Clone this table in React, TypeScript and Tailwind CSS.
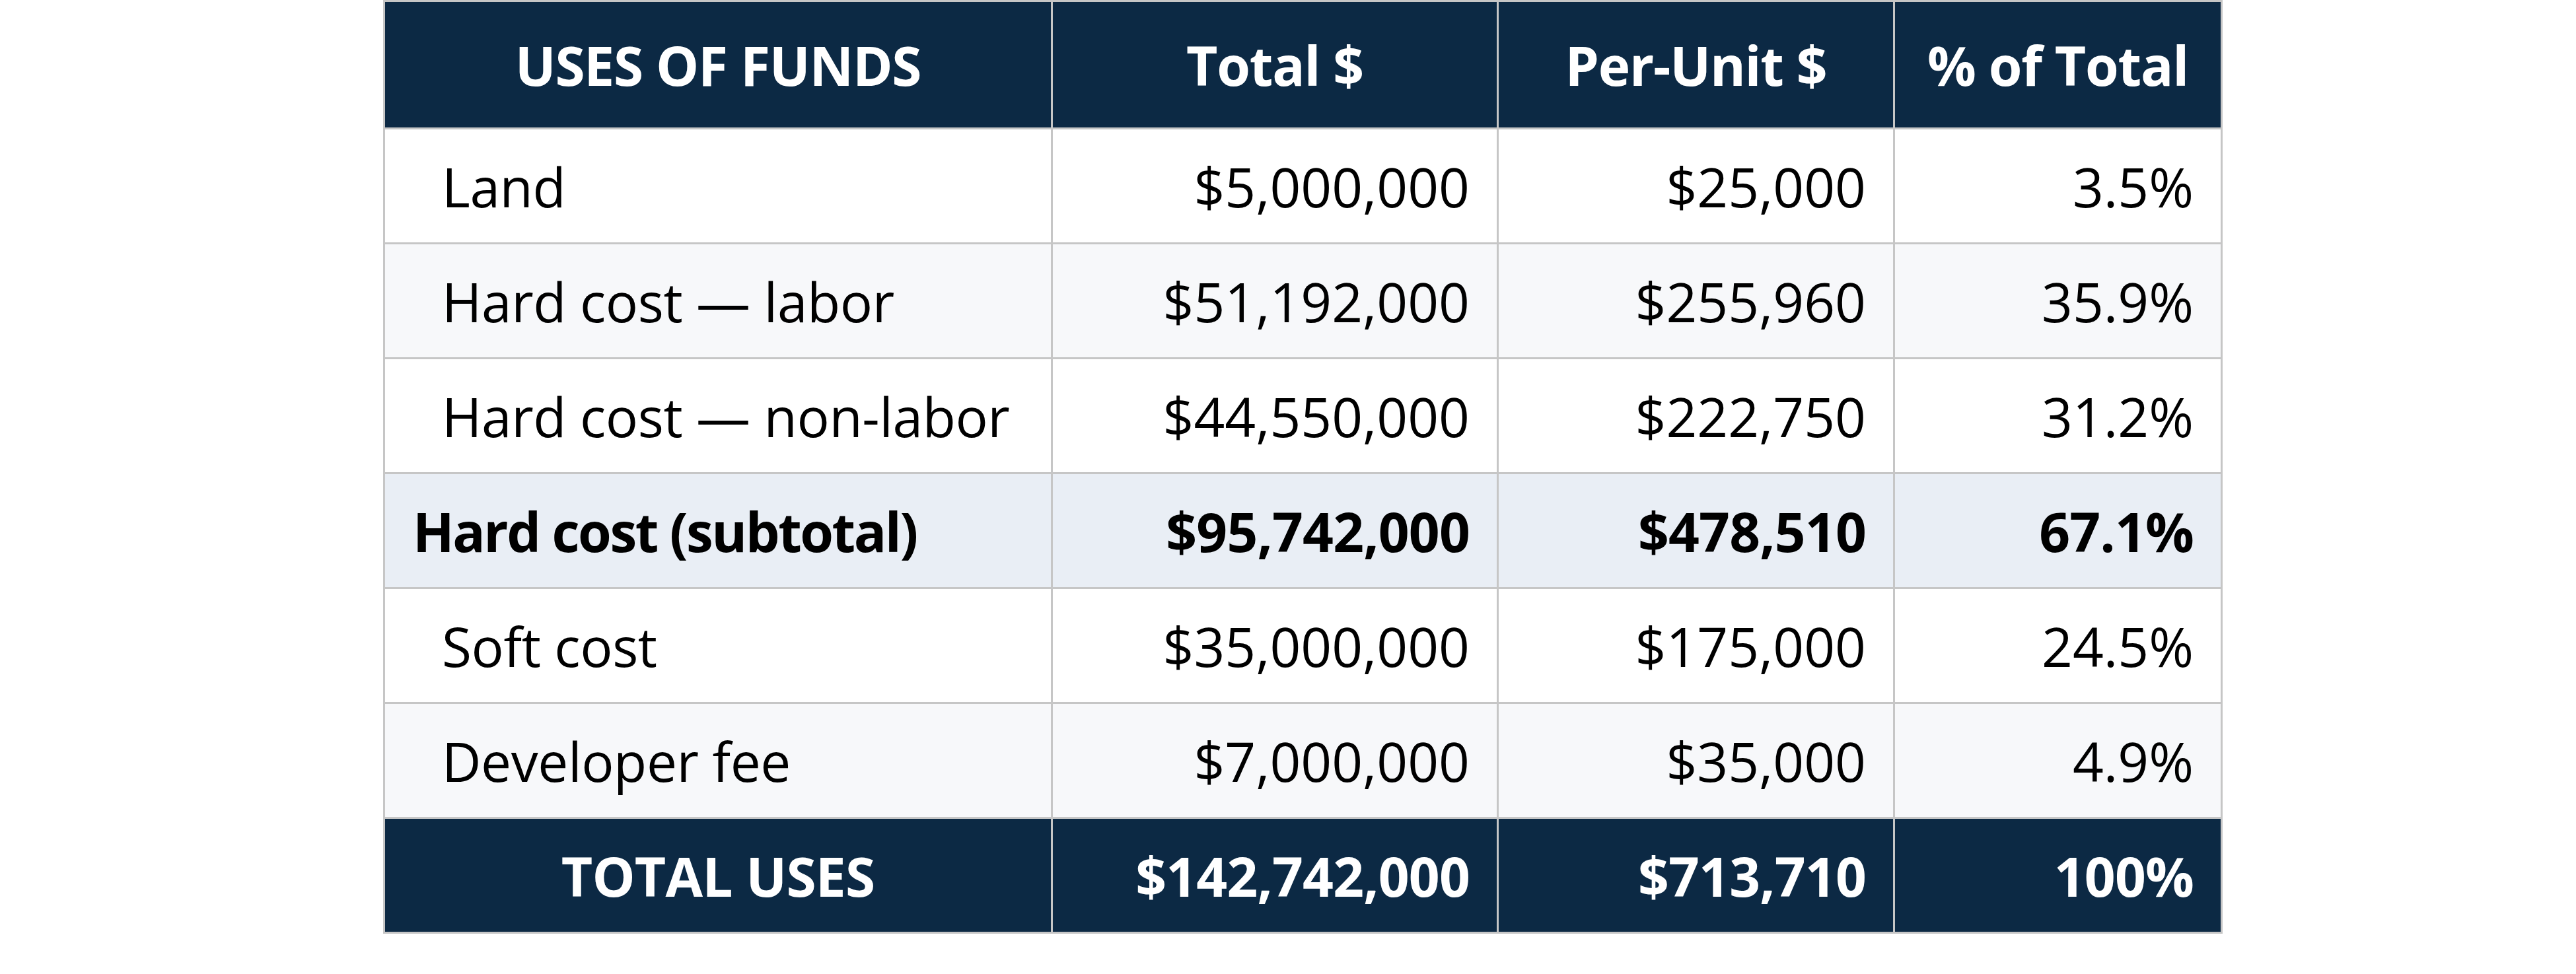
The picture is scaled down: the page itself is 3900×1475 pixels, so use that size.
const rows = [
  { label: "Land", total: "$5,000,000", unit: "$25,000", pct: "3.5%", kind: "item" },
  { label: "Hard cost — labor", total: "$51,192,000", unit: "$255,960", pct: "35.9%", kind: "item" },
  { label: "Hard cost — non-labor", total: "$44,550,000", unit: "$222,750", pct: "31.2%", kind: "item" },
  { label: "Hard cost (subtotal)", total: "$95,742,000", unit: "$478,510", pct: "67.1%", kind: "subtotal" },
  { label: "Soft cost", total: "$35,000,000", unit: "$175,000", pct: "24.5%", kind: "item" },
  { label: "Developer fee", total: "$7,000,000", unit: "$35,000", pct: "4.9%", kind: "item" },
];

const cell = "border-[3px] border-[#c6c6c6] h-[174px] p-0 align-middle";
const head = "h-[193px] border-[3px] border-[#c6c6c6] p-0 text-center align-middle";
const num = "text-right pr-[41px]";

export default function App() {
  return (
    <div className="min-h-screen bg-white pl-[580px] font-['Open_Sans',sans-serif] text-[82px] leading-none text-black">
      <table className="w-[2782px] table-fixed border-collapse">
        <colgroup>
          <col className="w-[1011px]" />
          <col className="w-[675px]" />
          <col className="w-[600px]" />
          <col className="w-[496px]" />
        </colgroup>
        <thead>
          <tr className="bg-[#0c2944] font-bold tracking-[-0.015em] text-white">
            <th className={head}>USES OF FUNDS</th>
            <th className={head}>Total $</th>
            <th className={head}>Per-Unit $</th>
            <th className={head}>% of Total</th>
          </tr>
        </thead>
        <tbody>
          {rows.map((r, i) => {
            const sub = r.kind === "subtotal";
            const bg = sub
              ? "bg-[#e9eef5] font-bold tracking-[-0.01em]"
              : i % 2 === 1
                ? "bg-[#f7f8fa]"
                : "bg-white";
            return (
              <tr key={r.label} className={bg}>
                <td
                  className={`${cell} ${sub ? "pl-[42px] tracking-[-0.03em]" : "pl-[86px] tracking-[-0.005em]"} text-left`}
                >
                  {r.label}
                </td>
                <td className={`${cell} ${num}`}>{r.total}</td>
                <td className={`${cell} ${num}`}>{r.unit}</td>
                <td className={`${cell} ${num}`}>{r.pct}</td>
              </tr>
            );
          })}
          <tr className="bg-[#0c2944] font-bold tracking-[-0.01em] text-white">
            <td className={`${cell} text-center`}>TOTAL USES</td>
            <td className={`${cell} ${num}`}>$142,742,000</td>
            <td className={`${cell} ${num}`}>$713,710</td>
            <td className={`${cell} ${num}`}>100%</td>
          </tr>
        </tbody>
      </table>
    </div>
  );
}
